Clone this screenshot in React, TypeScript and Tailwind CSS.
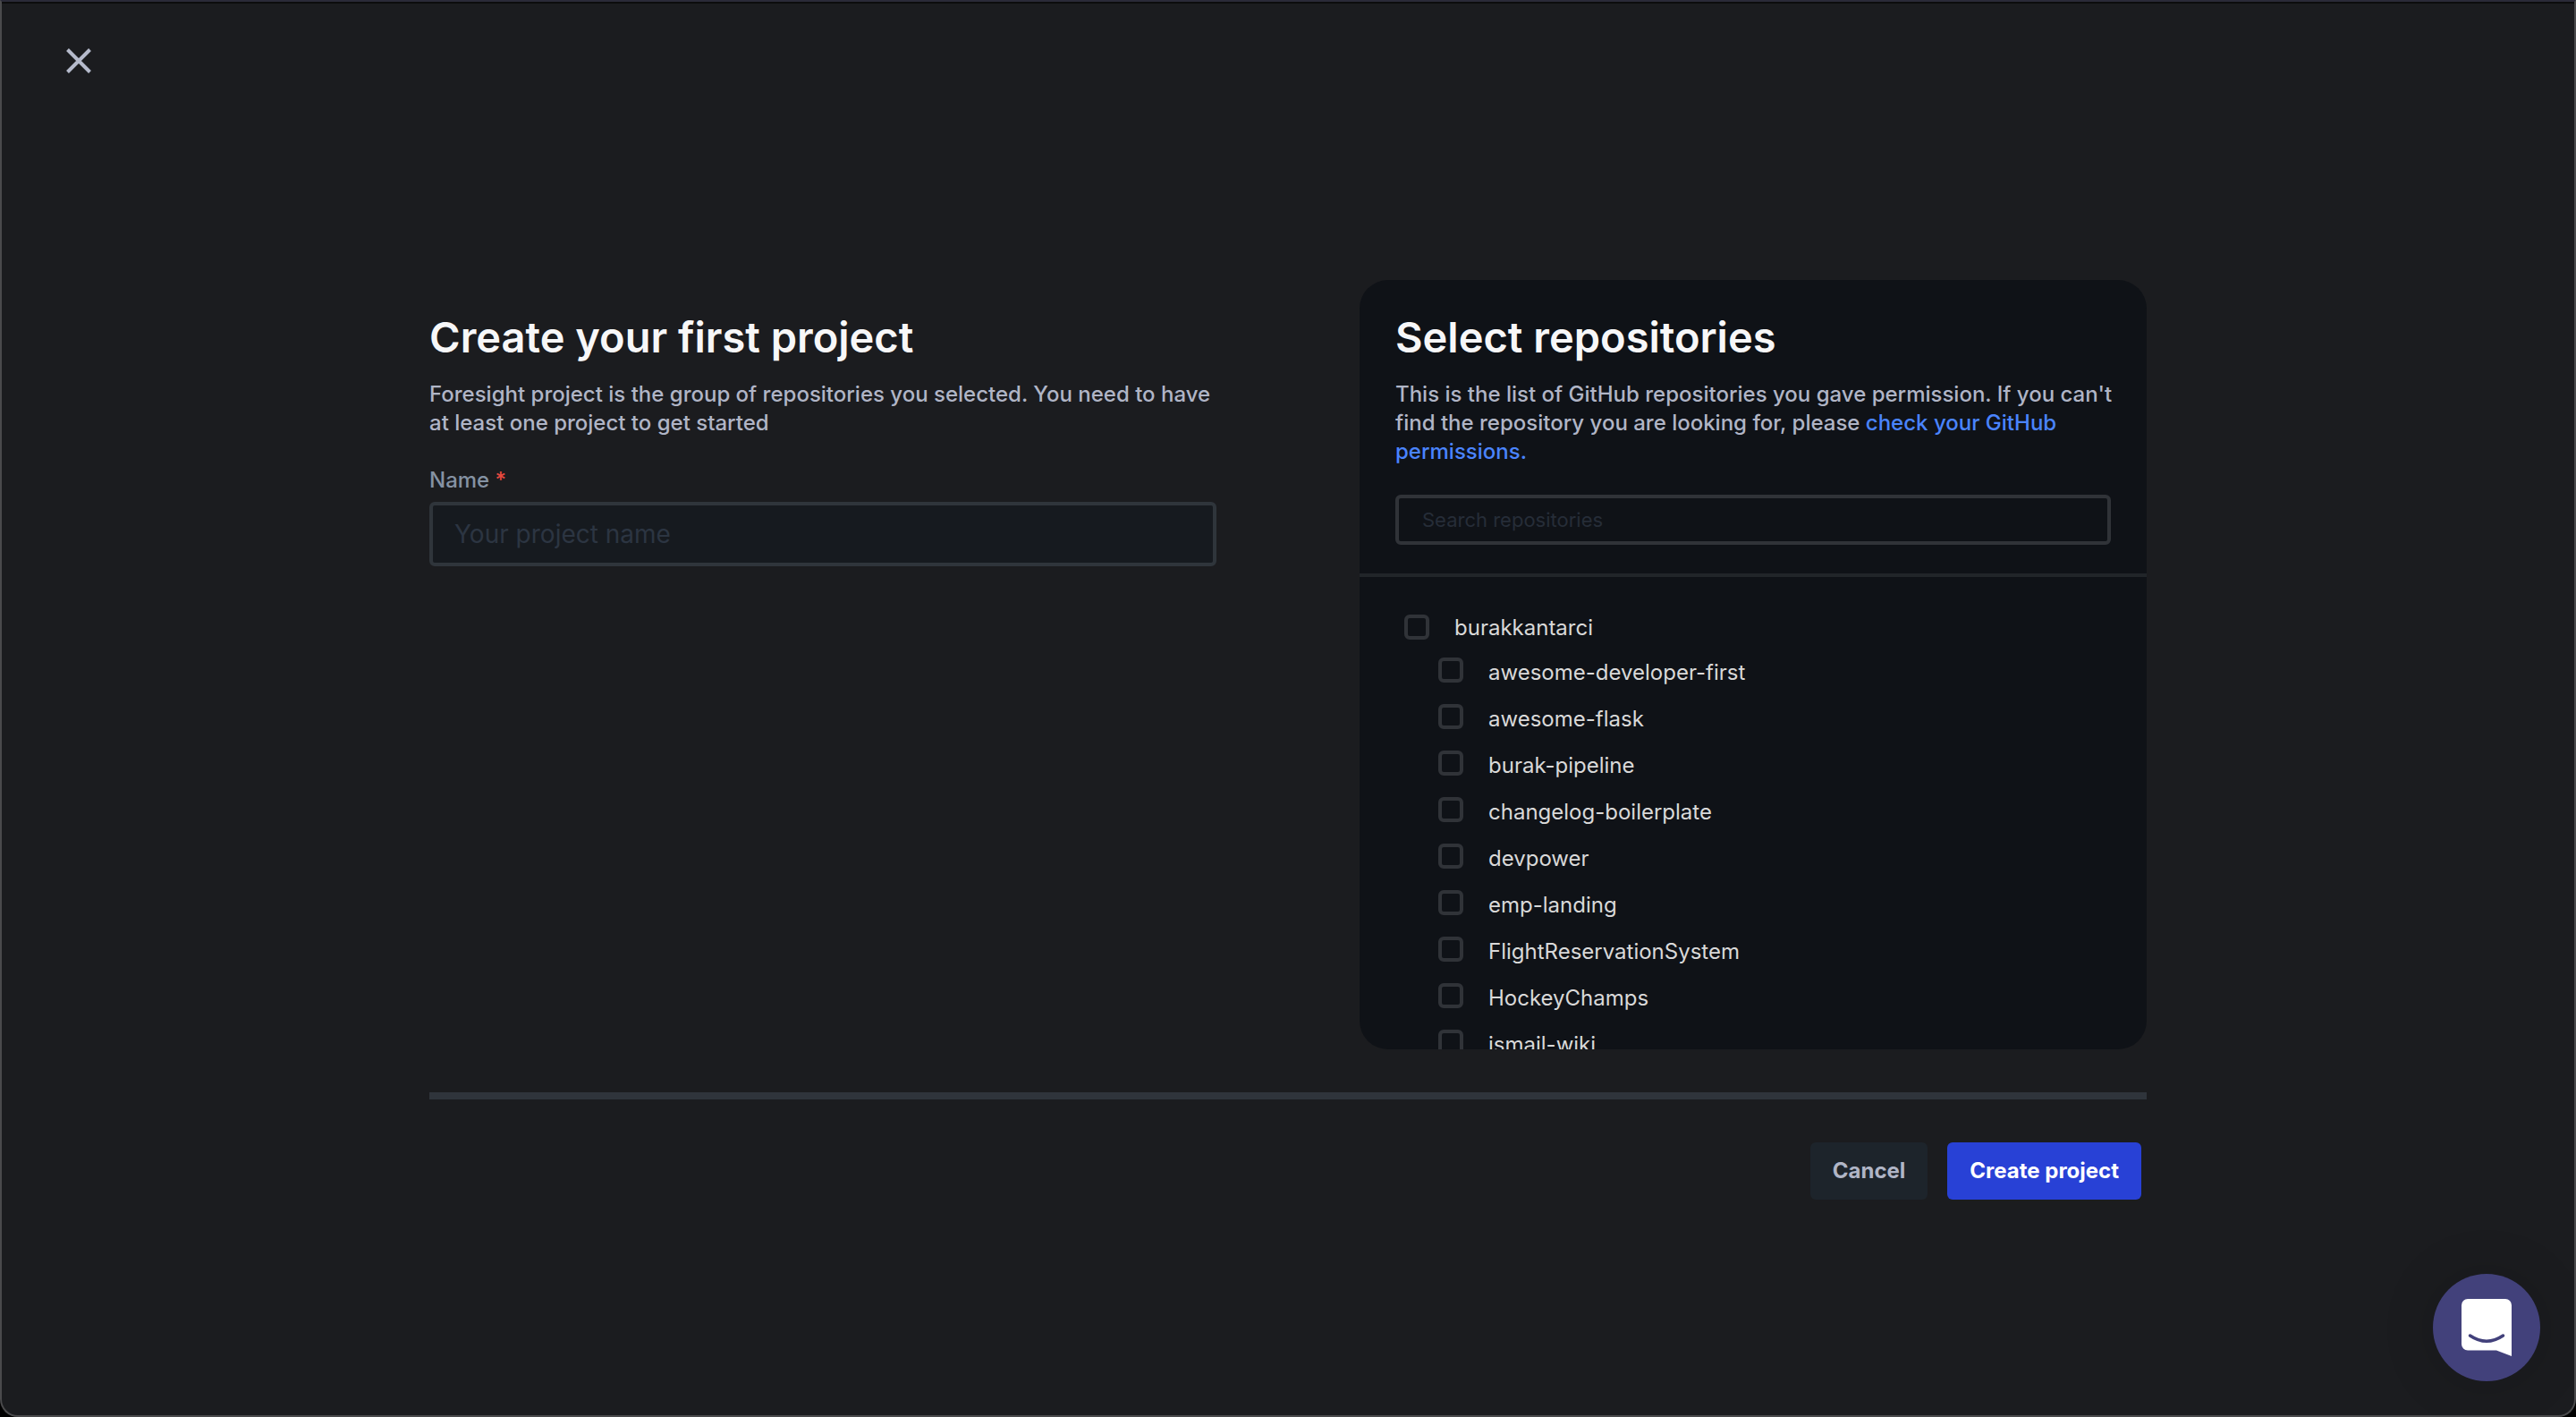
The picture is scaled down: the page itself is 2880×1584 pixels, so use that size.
import { useState } from "react";

const repositories = [
  "awesome-developer-first",
  "awesome-flask",
  "burak-pipeline",
  "changelog-boilerplate",
  "devpower",
  "emp-landing",
  "FlightReservationSystem",
  "HockeyChamps",
  "ismail-wiki",
];

const checkboxClass =
  "size-7 shrink-0 appearance-none rounded-[6px] border-4 border-[#303338] bg-transparent checked:bg-[#2841d6]";

function CloseIcon() {
  return (
    <svg viewBox="0 0 28 28" className="size-7" fill="none" stroke="currentColor" strokeWidth="4">
      <path d="M1.500 1.500 26.500 26.500M26.500 1.500 1.500 26.500" />
    </svg>
  );
}

function ChatIcon() {
  return (
    <svg viewBox="0 0 56 64" className="h-16 w-14" fill="none">
      <path
        d="M7 0H49A7 7 0 0 1 56 7V64L39 57.5H7A7 7 0 0 1 0 50.5V7A7 7 0 0 1 7 0Z"
        fill="#fff"
      />
      <path d="M9.5 41Q28 53.500 46.500 41" stroke="#42417b" strokeWidth="3.500" strokeLinecap="round" />
    </svg>
  );
}

function ProjectForm() {
  return (
    <section className="flex-1 pt-8">
      <h1 className="text-[47px] leading-16 font-semibold text-[#f7f7f8]">Create your first project</h1>
      <p className="mt-4 text-2xl leading-8 font-medium text-[#b0b5c6]">
        Foresight project is the group of repositories you selected. You need to have at least one
        project to get started
      </p>
      <label htmlFor="project-name" className="mt-8 block text-2xl leading-8 font-medium text-[#8592a3]">
        Name <span className="text-[#e5493f]">*</span>
      </label>
      <input
        id="project-name"
        type="text"
        placeholder="Your project name"
        className="mt-2 block h-18 w-full rounded-[6px] border-4 border-[#2f353b] bg-[#161a1f] px-6 text-[28px] text-white outline-none placeholder:text-[#2c3542]"
      />
    </section>
  );
}

function RepositoryPicker() {
  const [query, setQuery] = useState("");
  const shown = repositories.filter((name) => name.toLowerCase().includes(query.toLowerCase()));
  return (
    <section className="flex h-[860px] flex-1 flex-col overflow-hidden rounded-[32px] bg-[#0f1217]">
      <div className="border-b-4 border-[#212529] px-10 pt-8 pb-8">
        <h2 className="text-[47px] leading-16 font-semibold text-[#f7f7f8]">Select repositories</h2>
        <p className="mt-4 -mr-4 text-2xl leading-8 font-medium text-[#b0b5c6]">
          This is the list of GitHub repositories you gave permission. If you can't find the
          repository you are looking for, please{" "}
          <a href="#permissions" className="text-[#4a84ff]">
            check your GitHub permissions.
          </a>
        </p>
        <input
          type="text"
          aria-label="Search repositories"
          placeholder="Search repositories"
          value={query}
          onChange={(event) => setQuery(event.target.value)}
          className="mt-8 block h-14 w-full rounded-[6px] border-4 border-[#303338] bg-transparent px-[26px] text-[22px] text-white outline-none placeholder:text-[#262d38]"
        />
      </div>
      <div className="min-h-0 flex-1 overflow-hidden px-[50px] pt-[42px] text-2xl leading-[30px] text-[#d9d9d9]">
        <label className="flex h-7 items-start gap-7">
          <input type="checkbox" className={checkboxClass} />
          <span>burakkantarci</span>
        </label>
        <ul className="mt-5 flex flex-col gap-5 pl-[38px]">
          {shown.map((name) => (
            <li key={name}>
              <label className="flex h-8 items-start gap-7">
                <input type="checkbox" className={checkboxClass} />
                <span className="leading-[34px]">{name}</span>
              </label>
            </li>
          ))}
        </ul>
      </div>
    </section>
  );
}

export default function App() {
  return (
    <div className="min-h-screen bg-black font-['Inter',sans-serif]">
      <div className="relative flex min-h-screen flex-col rounded-b-[20px] border-2 border-[#4a4a4c] border-t-[#2a2a38] bg-[#1b1c1f]">
        <div className="border-t-2 border-[#0c0c0d] px-[72px] pt-[50px]">
          <button type="button" aria-label="Close" className="block text-[#b5bacb]">
            <CloseIcon />
          </button>
        </div>
        <main className="mx-auto mt-[231px] w-full max-w-[1920px]">
          <div className="flex items-start gap-40">
            <ProjectForm />
            <RepositoryPicker />
          </div>
          <hr className="mt-12 border-t-8 border-[#2f343b]" />
          <div className="mt-12 flex justify-end gap-[22px] pr-[6px] text-2xl font-bold">
            <button type="button" className="h-16 rounded-[6px] bg-[#1d242b] px-[25px] text-[#b0b5c6]">
              Cancel
            </button>
            <button type="button" className="h-16 rounded-[6px] bg-[#2841d6] px-[25px] text-white">
              Create project
            </button>
          </div>
        </main>
        <button
          type="button"
          aria-label="Open chat"
          className="fixed right-10 bottom-10 flex size-30 items-center justify-center rounded-full bg-[#42417b] shadow-[0_2px_60px_rgba(0,0,0,0.15)]"
        >
          <ChatIcon />
        </button>
      </div>
    </div>
  );
}
